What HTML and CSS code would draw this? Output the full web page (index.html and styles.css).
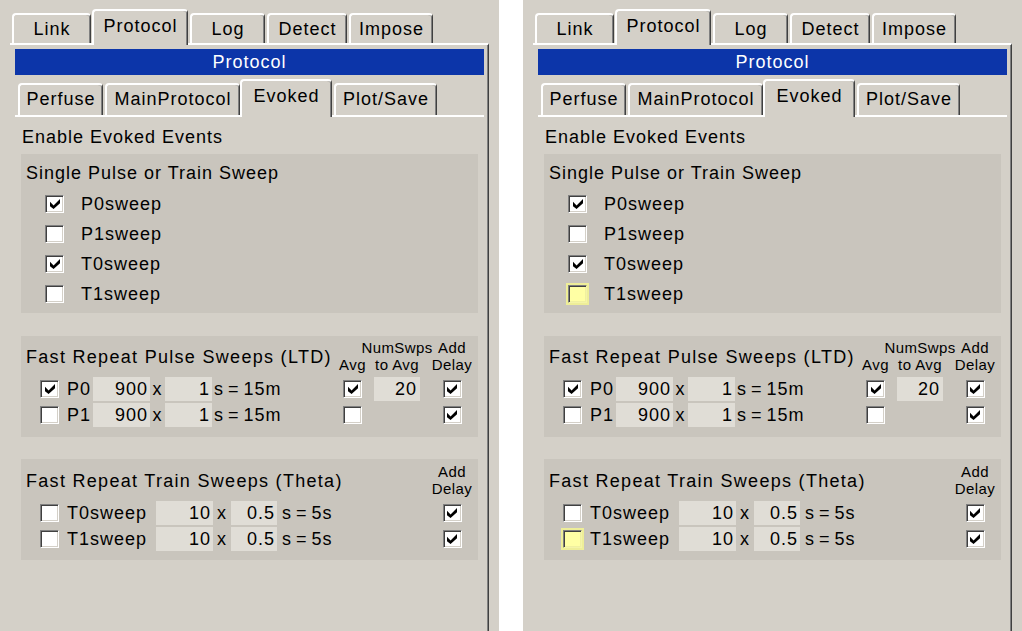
FILE: index.html
```html
<!DOCTYPE html>
<html lang="en">
<head>
    <meta charset="UTF-8">
    <meta name="viewport" content="width=device-width, initial-scale=1.0">
    <link rel="stylesheet" href="styles.css">
</head>
<body>
    <div class="screen">
        <!-- Painel normal -->
        <div class="panel">
            <div class="tabs">
                <div class="tab tab-link">Link</div>
                <div class="tab tab-protocol active">Protocol</div>
                <div class="tab tab-log">Log</div>
                <div class="tab tab-detect">Detect</div>
                <div class="tab tab-impose">Impose</div>
            </div>
            <div class="frame">
                <div class="title-bar">Protocol</div>
                <div class="subtabs">
                    <div class="subtab st-perfuse">Perfuse</div>
                    <div class="subtab st-main">MainProtocol</div>
                    <div class="subtab st-evoked active">Evoked</div>
                    <div class="subtab st-plot">Plot/Save</div>
                </div>
                <div class="subframe">
                    <div class="caption">Enable Evoked Events</div>

                    <div class="group group-single">
                        <div class="group-title">Single Pulse or Train Sweep</div>
                        <div class="sweep-row">
                            <span class="check"><svg viewBox="0 0 7 7" width="10" height="10"><path d="M0 2L2.5 4.5L7 0V3L2.5 7L0 5Z"/></svg></span>
                            <span class="sweep-label">P0sweep</span>
                        </div>
                        <div class="sweep-row">
                            <span class="check"></span>
                            <span class="sweep-label">P1sweep</span>
                        </div>
                        <div class="sweep-row">
                            <span class="check"><svg viewBox="0 0 7 7" width="10" height="10"><path d="M0 2L2.5 4.5L7 0V3L2.5 7L0 5Z"/></svg></span>
                            <span class="sweep-label">T0sweep</span>
                        </div>
                        <div class="sweep-row">
                            <span class="check"></span>
                            <span class="sweep-label">T1sweep</span>
                        </div>
                    </div>

                    <div class="group group-fast">
                        <div class="group-head">
                            <div class="group-title">Fast Repeat Pulse Sweeps (LTD)</div>
                            <div class="col-head col-avg">Avg</div>
                            <div class="col-head col-num">NumSwps<br>to Avg</div>
                            <div class="col-head col-add">Add<br>Delay</div>
                        </div>
                        <div class="fast-row">
                            <span class="check"><svg viewBox="0 0 7 7" width="10" height="10"><path d="M0 2L2.5 4.5L7 0V3L2.5 7L0 5Z"/></svg></span>
                            <span class="pulse-label">P0</span>
                            <span class="field field-count">900</span>
                            <span class="times">x</span>
                            <span class="field field-period">1</span>
                            <span class="unit">s = 15m</span>
                            <span class="cell-avg"><span class="check"><svg viewBox="0 0 7 7" width="10" height="10"><path d="M0 2L2.5 4.5L7 0V3L2.5 7L0 5Z"/></svg></span></span>
                            <span class="field field-num">20</span>
                            <span class="cell-add"><span class="check"><svg viewBox="0 0 7 7" width="10" height="10"><path d="M0 2L2.5 4.5L7 0V3L2.5 7L0 5Z"/></svg></span></span>
                        </div>
                        <div class="fast-row">
                            <span class="check"></span>
                            <span class="pulse-label">P1</span>
                            <span class="field field-count">900</span>
                            <span class="times">x</span>
                            <span class="field field-period">1</span>
                            <span class="unit">s = 15m</span>
                            <span class="cell-avg"><span class="check"></span></span>
                            <span class="num-spacer"></span>
                            <span class="cell-add"><span class="check"><svg viewBox="0 0 7 7" width="10" height="10"><path d="M0 2L2.5 4.5L7 0V3L2.5 7L0 5Z"/></svg></span></span>
                        </div>
                    </div>

                    <div class="group group-fast">
                        <div class="group-head">
                            <div class="group-title">Fast Repeat Train Sweeps (Theta)</div>
                            <div class="col-head col-add">Add<br>Delay</div>
                        </div>
                        <div class="fast-row">
                            <span class="check"></span>
                            <span class="train-label">T0sweep</span>
                            <span class="field field-count">10</span>
                            <span class="times times-wide">x</span>
                            <span class="field field-train">0.5</span>
                            <span class="unit unit-train">s = 5s</span>
                            <span class="cell-add"><span class="check"><svg viewBox="0 0 7 7" width="10" height="10"><path d="M0 2L2.5 4.5L7 0V3L2.5 7L0 5Z"/></svg></span></span>
                        </div>
                        <div class="fast-row">
                            <span class="check"></span>
                            <span class="train-label">T1sweep</span>
                            <span class="field field-count">10</span>
                            <span class="times times-wide">x</span>
                            <span class="field field-train">0.5</span>
                            <span class="unit unit-train">s = 5s</span>
                            <span class="cell-add"><span class="check"><svg viewBox="0 0 7 7" width="10" height="10"><path d="M0 2L2.5 4.5L7 0V3L2.5 7L0 5Z"/></svg></span></span>
                        </div>
                    </div>
                </div>
            </div>
        </div>

        <!-- Painel com T1sweep em destaque -->
        <div class="panel">
            <div class="tabs">
                <div class="tab tab-link">Link</div>
                <div class="tab tab-protocol active">Protocol</div>
                <div class="tab tab-log">Log</div>
                <div class="tab tab-detect">Detect</div>
                <div class="tab tab-impose">Impose</div>
            </div>
            <div class="frame">
                <div class="title-bar">Protocol</div>
                <div class="subtabs">
                    <div class="subtab st-perfuse">Perfuse</div>
                    <div class="subtab st-main">MainProtocol</div>
                    <div class="subtab st-evoked active">Evoked</div>
                    <div class="subtab st-plot">Plot/Save</div>
                </div>
                <div class="subframe">
                    <div class="caption">Enable Evoked Events</div>

                    <div class="group group-single">
                        <div class="group-title">Single Pulse or Train Sweep</div>
                        <div class="sweep-row">
                            <span class="check"><svg viewBox="0 0 7 7" width="10" height="10"><path d="M0 2L2.5 4.5L7 0V3L2.5 7L0 5Z"/></svg></span>
                            <span class="sweep-label">P0sweep</span>
                        </div>
                        <div class="sweep-row">
                            <span class="check"></span>
                            <span class="sweep-label">P1sweep</span>
                        </div>
                        <div class="sweep-row">
                            <span class="check"><svg viewBox="0 0 7 7" width="10" height="10"><path d="M0 2L2.5 4.5L7 0V3L2.5 7L0 5Z"/></svg></span>
                            <span class="sweep-label">T0sweep</span>
                        </div>
                        <div class="sweep-row">
                            <span class="check hot"></span>
                            <span class="sweep-label">T1sweep</span>
                        </div>
                    </div>

                    <div class="group group-fast">
                        <div class="group-head">
                            <div class="group-title">Fast Repeat Pulse Sweeps (LTD)</div>
                            <div class="col-head col-avg">Avg</div>
                            <div class="col-head col-num">NumSwps<br>to Avg</div>
                            <div class="col-head col-add">Add<br>Delay</div>
                        </div>
                        <div class="fast-row">
                            <span class="check"><svg viewBox="0 0 7 7" width="10" height="10"><path d="M0 2L2.5 4.5L7 0V3L2.5 7L0 5Z"/></svg></span>
                            <span class="pulse-label">P0</span>
                            <span class="field field-count">900</span>
                            <span class="times">x</span>
                            <span class="field field-period">1</span>
                            <span class="unit">s = 15m</span>
                            <span class="cell-avg"><span class="check"><svg viewBox="0 0 7 7" width="10" height="10"><path d="M0 2L2.5 4.5L7 0V3L2.5 7L0 5Z"/></svg></span></span>
                            <span class="field field-num">20</span>
                            <span class="cell-add"><span class="check"><svg viewBox="0 0 7 7" width="10" height="10"><path d="M0 2L2.5 4.5L7 0V3L2.5 7L0 5Z"/></svg></span></span>
                        </div>
                        <div class="fast-row">
                            <span class="check"></span>
                            <span class="pulse-label">P1</span>
                            <span class="field field-count">900</span>
                            <span class="times">x</span>
                            <span class="field field-period">1</span>
                            <span class="unit">s = 15m</span>
                            <span class="cell-avg"><span class="check"></span></span>
                            <span class="num-spacer"></span>
                            <span class="cell-add"><span class="check"><svg viewBox="0 0 7 7" width="10" height="10"><path d="M0 2L2.5 4.5L7 0V3L2.5 7L0 5Z"/></svg></span></span>
                        </div>
                    </div>

                    <div class="group group-fast">
                        <div class="group-head">
                            <div class="group-title">Fast Repeat Train Sweeps (Theta)</div>
                            <div class="col-head col-add">Add<br>Delay</div>
                        </div>
                        <div class="fast-row">
                            <span class="check"></span>
                            <span class="train-label">T0sweep</span>
                            <span class="field field-count">10</span>
                            <span class="times times-wide">x</span>
                            <span class="field field-train">0.5</span>
                            <span class="unit unit-train">s = 5s</span>
                            <span class="cell-add"><span class="check"><svg viewBox="0 0 7 7" width="10" height="10"><path d="M0 2L2.5 4.5L7 0V3L2.5 7L0 5Z"/></svg></span></span>
                        </div>
                        <div class="fast-row">
                            <span class="check hot"></span>
                            <span class="train-label">T1sweep</span>
                            <span class="field field-count">10</span>
                            <span class="times times-wide">x</span>
                            <span class="field field-train">0.5</span>
                            <span class="unit unit-train">s = 5s</span>
                            <span class="cell-add"><span class="check"><svg viewBox="0 0 7 7" width="10" height="10"><path d="M0 2L2.5 4.5L7 0V3L2.5 7L0 5Z"/></svg></span></span>
                        </div>
                    </div>
                </div>
            </div>
        </div>
    </div>
</body>
</html>
```
FILE: styles.css
```css
* {
    margin: 0;
    padding: 0;
    box-sizing: border-box;
}

body {
    background: #fff;
    font-family: "Liberation Sans", Arial, sans-serif;
    font-size: 18px;
    letter-spacing: 1px;
    color: #000;
}

.screen {
    display: flex;
    gap: 24px;
}

.panel {
    width: 499px;
    height: 631px;
    background: #d4d0c8;
    overflow: hidden;
}

/* Abas de cima */
.tabs {
    display: flex;
    align-items: flex-end;
    height: 43px;
    padding-left: 12px;
}

.tab {
    height: 30px;
    padding-top: 4px;
    line-height: 20px;
    text-align: center;
    border-top: 2px solid #fff;
    border-left: 2px solid #fff;
    border-right: 1px solid #404040;
    box-shadow: inset -1px 0 #808080;
    border-radius: 4px 4px 0 0;
    margin-right: 2px;
}

.tab.active {
    height: 36px;
    padding-top: 5px;
    margin-bottom: -2px;
    position: relative;
    z-index: 1;
    background: #d4d0c8;
}

.tab-link { width: 79px; margin-right: 1px; }
.tab-protocol { width: 96px; }
.tab-log { width: 75px; }
.tab-detect { width: 80px; }
.tab-impose { width: 84px; }

.frame {
    width: 479px;
    height: 588px;
    margin-left: 10px;
    border-top: 2px solid #fff;
    border-right: 1px solid #404040;
    box-shadow: inset -1px 0 #808080;
    padding: 4px 4px 0 5px;
}

.title-bar {
    height: 26px;
    line-height: 26px;
    background: #0c35a9;
    color: #fff;
    text-align: center;
}

/* Abas internas */
.subtabs {
    display: flex;
    align-items: flex-end;
    height: 40px;
    padding-left: 3px;
}

.subtab {
    height: 32px;
    padding-top: 4px;
    line-height: 20px;
    text-align: center;
    border-top: 2px solid #fff;
    border-left: 2px solid #fff;
    border-right: 1px solid #404040;
    box-shadow: inset -1px 0 #808080;
    border-radius: 4px 4px 0 0;
    margin-right: 2px;
}

.subtab.active {
    height: 38px;
    padding-top: 5px;
    margin-bottom: -2px;
    position: relative;
    z-index: 1;
    background: #d4d0c8;
}

.st-perfuse { width: 85px; }
.st-main { width: 135px; margin-right: 0; }
.st-evoked { width: 92px; }
.st-plot { width: 103px; }

.subframe {
    border-top: 2px solid #fff;
    padding: 10px 6px 0 6px;
}

.caption {
    line-height: 20px;
    padding-left: 1px;
}

/* Grupos */
.group {
    background: #c9c5bd;
    padding-left: 5px;
}

.group-single {
    margin-top: 7px;
    height: 159px;
    padding-top: 9px;
}

.group-fast {
    height: 101px;
    margin-top: 23px;
    padding-top: 3px;
}

.group-fast + .group-fast {
    margin-top: 22px;
    padding-top: 4px;
}

.group-title {
    line-height: 20px;
}

.group-single .group-title {
    margin-bottom: 6px;
}

.sweep-row {
    display: flex;
    align-items: center;
    height: 30px;
    padding-left: 19px;
}

.sweep-label {
    margin-left: 17px;
    line-height: 20px;
}

.group-head {
    display: flex;
    height: 34px;
    padding-right: 6px;
    margin-bottom: 3px;
}

.group-head .group-title {
    flex: 1;
    margin-top: 8px;
    white-space: nowrap;
    letter-spacing: 1.3px;
}

.col-head {
    display: flex;
    flex-direction: column;
    justify-content: flex-end;
    align-items: center;
    height: 34px;
    font-size: 15px;
    line-height: 17px;
    letter-spacing: 0.4px;
    white-space: nowrap;
    text-align: center;
}

.col-avg { width: 39px; }
.col-num { width: 46px; margin-left: 2px; }
.col-add { width: 40px; margin-left: 12px; }

.fast-row {
    display: flex;
    align-items: center;
    height: 26px;
    padding-left: 14px;
    padding-right: 6px;
    line-height: 20px;
    white-space: nowrap;
}

.pulse-label {
    width: 26px;
    margin-left: 8px;
}

.train-label {
    width: 89px;
    margin-left: 8px;
}

.field {
    height: 24px;
    line-height: 24px;
    background: #e0ddd6;
    text-align: right;
    padding-right: 2px;
}

.field-count { width: 57px; }
.field-period { width: 47px; }
.field-train { width: 46px; }
.field-num { width: 46px; margin-left: 2px; padding-right: 3px; }

.num-spacer {
    width: 46px;
    margin-left: 2px;
}

.times {
    width: 15px;
    text-align: center;
}

.times-wide {
    width: 18px;
}

.unit {
    flex: 1;
    margin-left: 2px;
    word-spacing: -2px;
}

.unit-train {
    margin-left: 5px;
}

.cell-avg {
    width: 39px;
    display: flex;
    justify-content: center;
}

.cell-add {
    width: 40px;
    margin-left: 12px;
    display: flex;
    justify-content: center;
}

/* Caixa de seleção no estilo clássico */
.check {
    width: 19px;
    height: 18px;
    flex-shrink: 0;
    display: flex;
    align-items: center;
    justify-content: center;
    background: #fff;
    border: 1px solid;
    border-color: #808080 #fff #fff #808080;
    box-shadow: inset 1px 1px #404040, inset -1px -1px #d4d0c8;
}

.check svg {
    fill: #000;
}

.check.hot {
    background: #ffffa4;
    border-color: #808080 #f4f4a8 #f4f4a8 #808080;
    box-shadow: inset 1px 1px #404040, inset -1px -1px #f0f0a0, 0 0 0 2px #eeee98;
}
```
